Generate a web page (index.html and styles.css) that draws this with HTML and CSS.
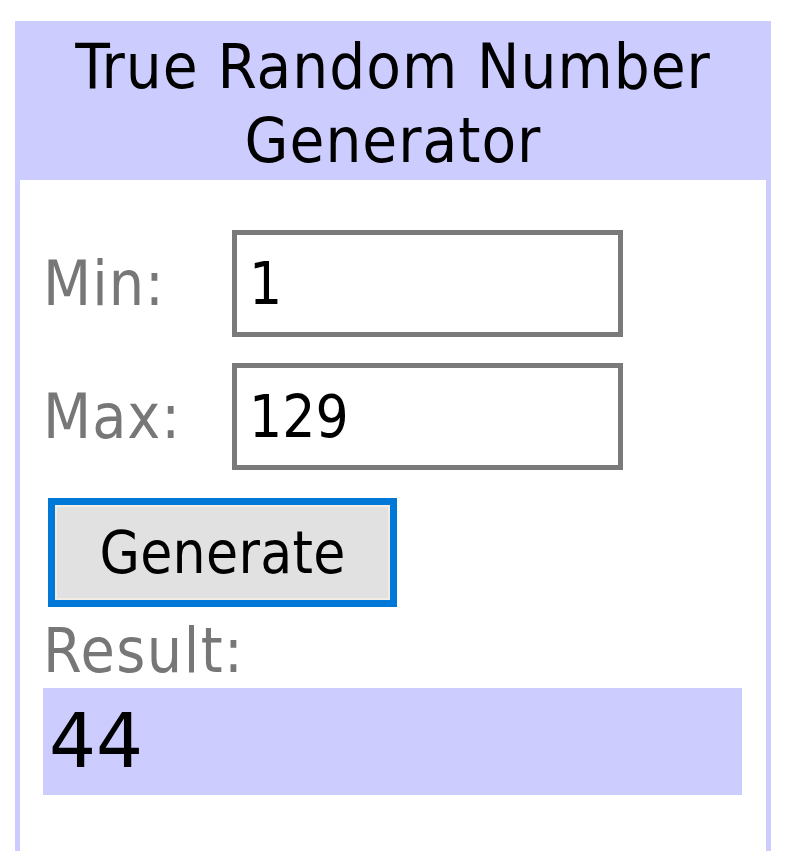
FILE: index.html
```html
<!DOCTYPE html>
<html lang="en">
<head>
    <meta charset="UTF-8">
    <meta name="viewport" content="width=device-width, initial-scale=1.0">
    <title>True Random Number Generator</title>
    <link rel="stylesheet" href="styles.css">
</head>
<body>
    <div class="widget">
        <div class="widget-title">True Random Number Generator</div>
        <form class="widget-body" onsubmit="return false;">
            <div class="field">
                <label class="field-label" for="minInput">Min:</label>
                <input type="text" id="minInput" class="field-input" value="1">
            </div>
            <div class="field">
                <label class="field-label" for="maxInput">Max:</label>
                <input type="text" id="maxInput" class="field-input" value="129">
            </div>
            <button type="button" class="generate-btn">Generate</button>
            <div class="result-label">Result:</div>
            <div class="result-box">44</div>
        </form>
    </div>
</body>
</html>
```
FILE: styles.css
```css
/* Scaled-up random number widget */
body {
    margin: 0;
    background-color: #ffffff;
    color: #000000;
    font-family: 'DejaVu Sans Condensed', 'DejaVu Sans', sans-serif;
    font-stretch: condensed;
}

.widget {
    width: 746px;
    margin: 21px 0 0 15px;
    border: 5px solid #ccccff;
    border-top: none;
}

.widget-title {
    background-color: #ccccff;
    text-align: center;
    font-size: 63px;
    line-height: 74px;
    letter-spacing: 1px;
    padding: 9px 40px 2px;
}

.widget-body {
    padding: 50px 24px 80px 23px;
}

.field {
    display: flex;
    align-items: center;
    margin-bottom: 26px;
}

.field-label {
    width: 189px;
    color: #777777;
    font-size: 62px;
    letter-spacing: 1px;
}

.field-input {
    box-sizing: border-box;
    width: 391px;
    height: 107px;
    padding: 0 12px;
    border: 5px solid #7a7a7a;
    background-color: #ffffff;
    color: #000000;
    font-family: inherit;
    font-stretch: condensed;
    font-size: 58px;
    outline: none;
}

.generate-btn {
    display: block;
    box-sizing: border-box;
    width: 349px;
    height: 109px;
    margin: 28px 0 0 5px;
    padding: 0;
    border: 7px solid #0078d7;
    box-shadow: inset 0 0 0 2px #f3ece4;
    background-color: #e1e1e1;
    color: #000000;
    font-family: inherit;
    font-stretch: condensed;
    font-size: 58px;
    letter-spacing: 0.3px;
}

.result-label {
    margin-top: 7px;
    color: #777777;
    font-size: 62px;
    line-height: 74px;
    letter-spacing: 1.5px;
}

.result-box {
    height: 107px;
    padding-left: 6px;
    background-color: #ccccff;
    font-family: 'DejaVu Sans', sans-serif;
    font-stretch: normal;
    font-size: 74px;
    line-height: 107px;
}
```
